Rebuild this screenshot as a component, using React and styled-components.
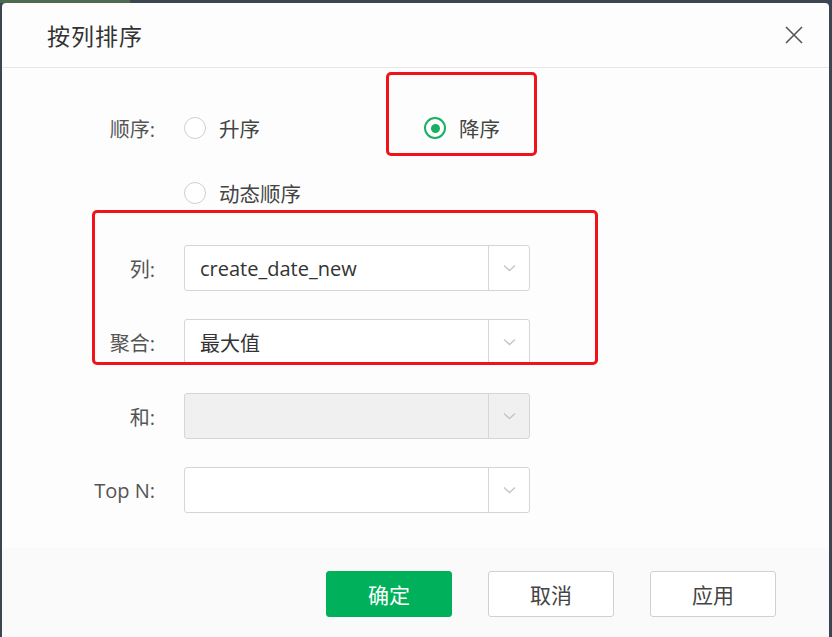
import React from "react";
import styled, { createGlobalStyle } from "styled-components";

const GlobalStyle = createGlobalStyle`
  html, body {
    margin: 0;
    padding: 0;
    height: 100%;
    overflow: hidden;
    background: #3b4652;
  }
  body {
    font-family: "Noto Sans CJK SC", "Open Sans", sans-serif;
  }
`;

const Page = styled.div`
  padding: 3px 3px 0 2px;
  height: 100vh;
  box-sizing: border-box;
  display: flex;
  flex-direction: column;
  background: linear-gradient(180deg, #4d6b4f 0, #4d6b4f 3px, transparent 3px) no-repeat 0 0 / 130px 3px, #3b4652;
`;

const Dialog = styled.div`
  position: relative;
  flex: 1;
  background: #fdfdfd;
  border-radius: 4px 4px 0 0;
  display: flex;
  flex-direction: column;
  overflow: hidden;
`;

const Header = styled.div`
  height: 64px;
  flex-shrink: 0;
  display: flex;
  align-items: center;
  justify-content: space-between;
  padding: 0 24px 0 45px;
  border-bottom: 1px solid #e6e6e6;
`;

const Title = styled.div`
  font-size: 23px;
  color: #333;
  letter-spacing: 1px;
`;

const Close = styled.button`
  border: 0;
  background: none;
  padding: 0;
  width: 22px;
  height: 22px;
  cursor: pointer;
  display: flex;
  align-items: center;
  justify-content: center;
`;

const Body = styled.div`
  padding: 40px 0 35px;
  display: grid;
  grid-template-columns: 153px 346px;
  column-gap: 29px;
  align-items: center;
`;

const Label = styled.div`
  font-family: "Open Sans", "Noto Sans CJK SC", sans-serif;
  font-size: 20px;
  color: #555;
  text-align: right;
  white-space: nowrap;
  margin-bottom: ${(p) => p.$gap}px;
`;

const RadioRow = styled.div`
  display: flex;
  height: 40px;
  align-items: center;
  margin-bottom: ${(p) => p.$gap}px;
`;

const Option = styled.label`
  width: 240px;
  flex-shrink: 0;
  display: flex;
  align-items: center;
  gap: 13px;
  font-size: 20.5px;
  color: #444;
  cursor: pointer;
`;

const Circle = styled.span`
  width: 22px;
  height: 22px;
  box-sizing: border-box;
  border-radius: 50%;
  border: ${(p) => (p.$on ? "2px solid #1ab064" : "1.5px solid #cfcfcf")};
  display: flex;
  align-items: center;
  justify-content: center;
  background: #fff;

  &::after {
    content: "";
    display: ${(p) => (p.$on ? "block" : "none")};
    width: 9px;
    height: 9px;
    border-radius: 50%;
    background: #1ab064;
  }
`;

const Select = styled.div`
  height: 46px;
  box-sizing: border-box;
  border: 1px solid #d6d6d6;
  border-radius: 3px;
  background: ${(p) => (p.$disabled ? "#f0f0f0" : "#fff")};
  display: flex;
  margin-bottom: ${(p) => p.$gap}px;
`;

const Value = styled.div`
  flex: 1;
  padding-left: 15px;
  display: flex;
  align-items: center;
  font-family: "Open Sans", "Noto Sans CJK SC", sans-serif;
  font-size: 20px;
  color: #333;
`;

const Arrow = styled.div`
  width: 40px;
  border-left: 1px solid #d6d6d6;
  display: flex;
  align-items: center;
  justify-content: center;
`;

const Footer = styled.div`
  flex: 1;
  background: #fafafa;
  display: flex;
  justify-content: flex-end;
  align-items: flex-start;
  gap: 36px;
  padding: 23px 53px 0 0;
`;

const Button = styled.button`
  width: 126px;
  height: 46px;
  border-radius: 3px;
  font-family: "Noto Sans CJK SC", sans-serif;
  font-size: 21px;
  cursor: pointer;
  border: 1px solid ${(p) => (p.$primary ? "#00b05a" : "#d0d0d0")};
  background: ${(p) => (p.$primary ? "#00b05a" : "#fff")};
  color: ${(p) => (p.$primary ? "#fff" : "#444")};
`;

const Mark = styled.div`
  position: absolute;
  border: 3px solid #f0141a;
  border-radius: 5px;
  pointer-events: none;
`;

function Chevron() {
  return (
    <svg width="13" height="8" viewBox="0 0 13 8">
      <path d="M1 1.5l5.5 5L12 1.5" fill="none" stroke="#c4c4c4" strokeWidth="1.3" />
    </svg>
  );
}

function Dropdown({ value, disabled, gap }) {
  return (
    <Select $disabled={disabled} $gap={gap}>
      <Value>{value}</Value>
      <Arrow>
        <Chevron />
      </Arrow>
    </Select>
  );
}

const rows = [
  { label: "列:", value: "create_date_new", gap: 28 },
  { label: "聚合:", value: "最大值", gap: 28 },
  { label: "和:", value: "", disabled: true, gap: 28 },
  { label: "Top N:", value: "", gap: 0 },
];

export default function App() {
  return (
    <Page>
      <GlobalStyle />
      <Dialog>
        <Header>
          <Title>按列排序</Title>
          <Close>
            <svg width="20" height="20" viewBox="0 0 20 20">
              <path d="M2 2l16 16M18 2L2 18" stroke="#555" strokeWidth="1.6" />
            </svg>
          </Close>
        </Header>
        <Body>
          <Label $gap={25}>顺序:</Label>
          <RadioRow $gap={25}>
            <Option>
              <Circle />
              升序
            </Option>
            <Option>
              <Circle $on />
              降序
            </Option>
          </RadioRow>
          <Label $gap={32} />
          <RadioRow $gap={32}>
            <Option>
              <Circle />
              动态顺序
            </Option>
          </RadioRow>
          {rows.map((r) => (
            <React.Fragment key={r.label}>
              <Label $gap={r.gap}>{r.label}</Label>
              <Dropdown value={r.value} disabled={r.disabled} gap={r.gap} />
            </React.Fragment>
          ))}
        </Body>
        <Footer>
          <Button $primary>确定</Button>
          <Button>取消</Button>
          <Button>应用</Button>
        </Footer>
        <Mark style={{ left: 384, top: 69, width: 145, height: 78 }} />
        <Mark style={{ left: 90, top: 207, width: 500, height: 149 }} />
      </Dialog>
    </Page>
  );
}
